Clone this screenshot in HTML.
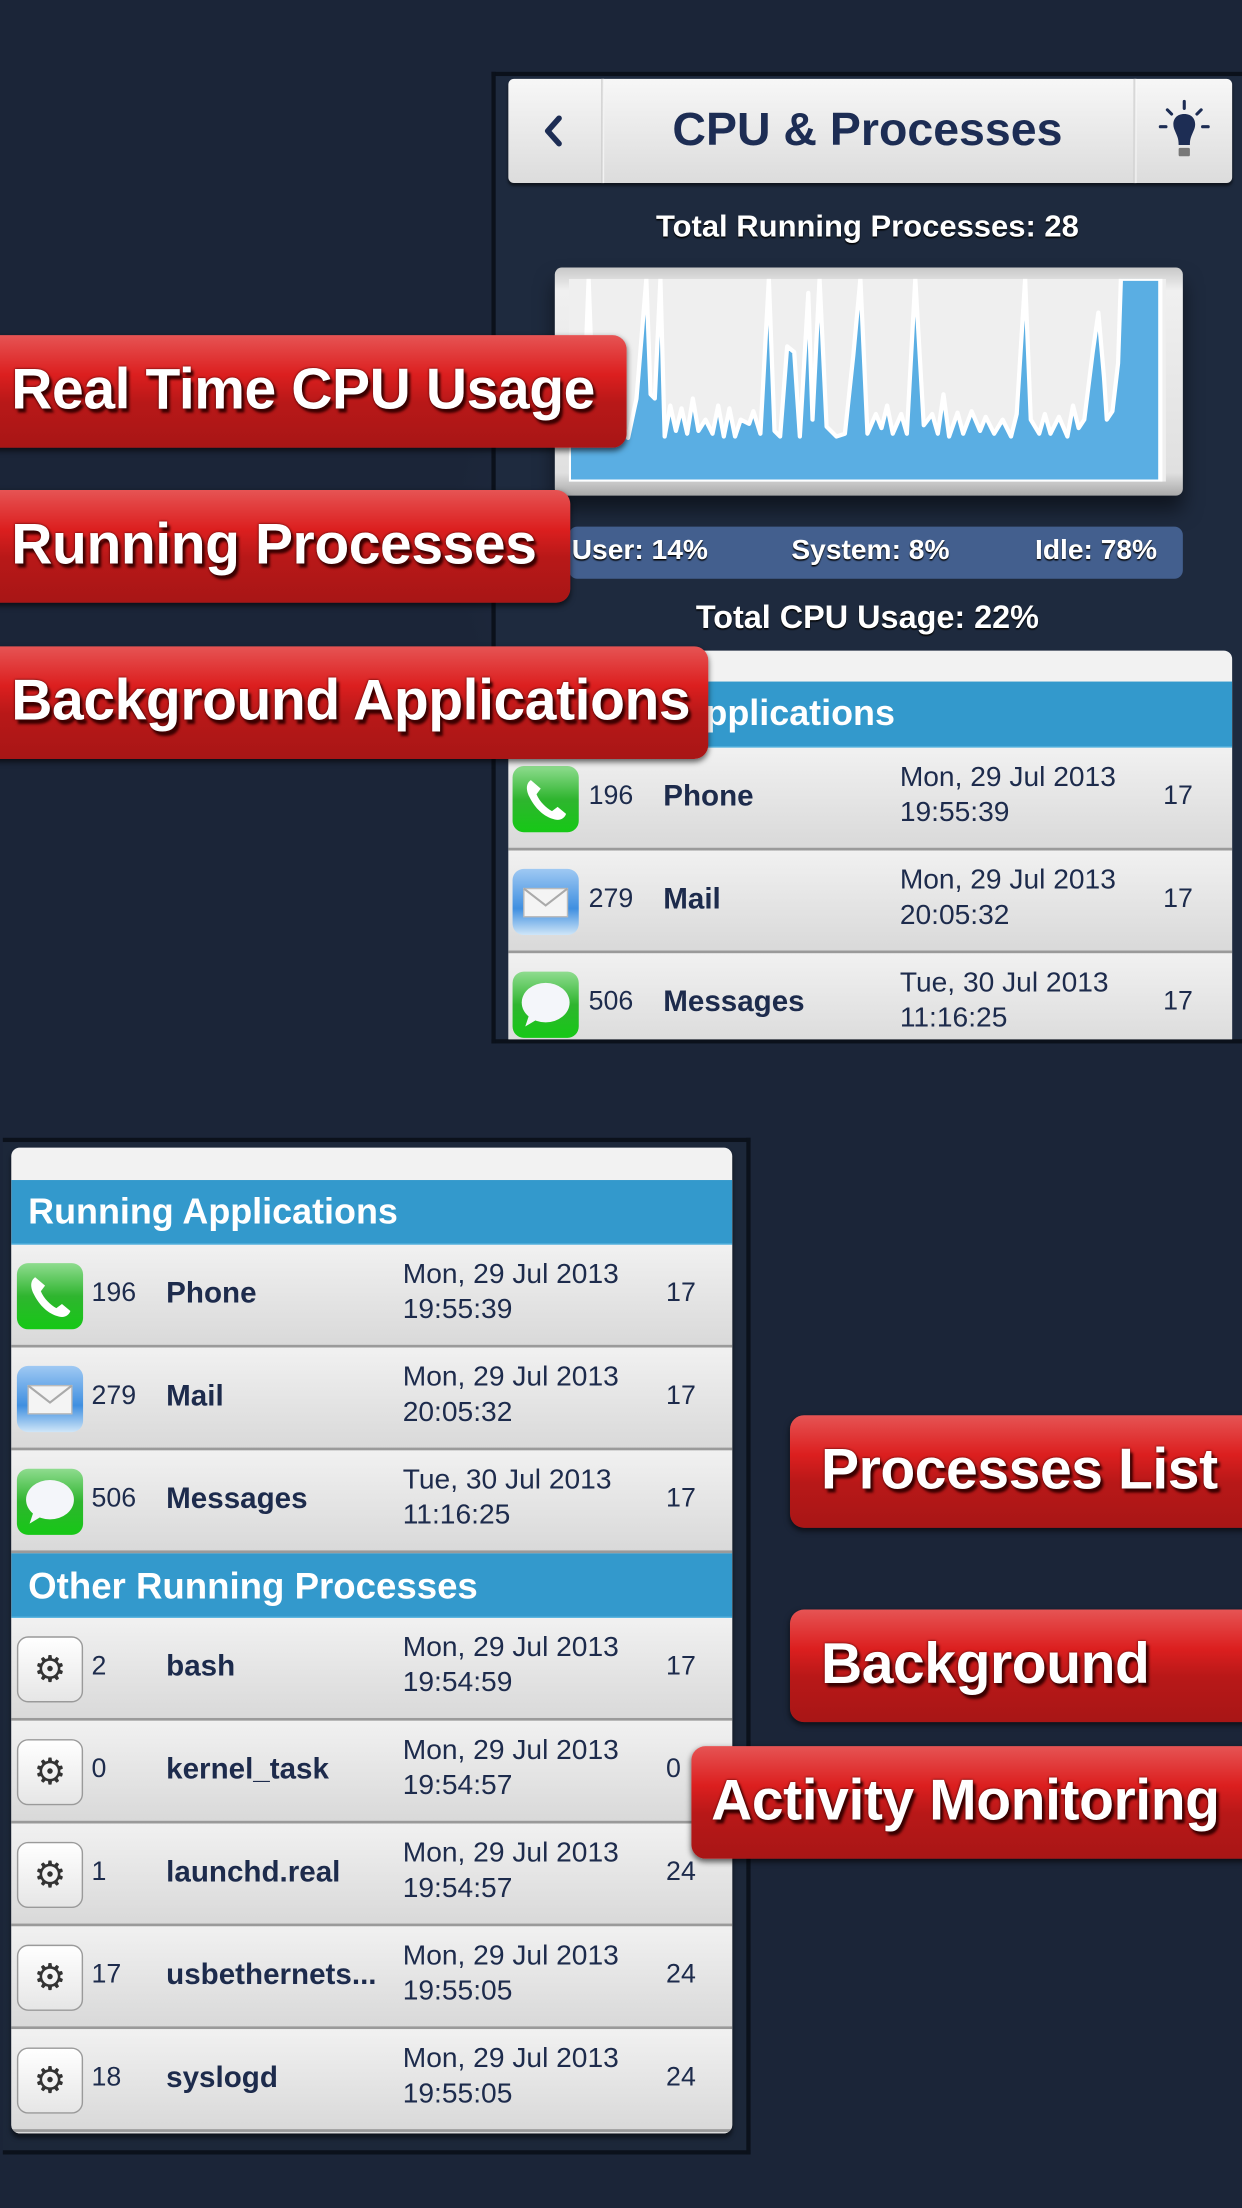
<!DOCTYPE html>
<html><head><meta charset="utf-8"><style>
*{margin:0;padding:0;box-sizing:border-box}
html,body{width:1242px;height:2208px;overflow:hidden;background:#1b2538}
#w{position:absolute;left:0;top:0;width:882px;height:1568px;transform:scale(1.40816);transform-origin:0 0;font-family:"Liberation Sans",sans-serif;background:radial-gradient(ellipse 300px 250px at 620px 380px,#2a3a55,transparent),#1b2538}
.abs{position:absolute}
.panel{position:absolute;background:#1e2a3e;border:3px solid #0b111b}
.nav{position:absolute;left:361px;top:56px;width:514px;height:74px;border-radius:4px;background:linear-gradient(#f7f7f7,#dcdcdc);box-shadow:0 2px 2px rgba(0,0,0,.5)}
.nav .sep{position:absolute;top:0;width:2px;height:74px;background:linear-gradient(90deg,#c4c4c4,#fff)}
.wt{position:absolute;color:#fff;font-weight:bold;font-size:22px;text-shadow:0 1px 1px #000;white-space:nowrap}
.list{position:absolute;overflow:hidden}
.hdr{height:46px;background:#3399cc;color:#fff;font-weight:bold;font-size:25.5px;line-height:46px;padding-left:12px;border-bottom:1px solid #5ab5e0;white-space:nowrap}
.row{position:relative;height:73px;background:linear-gradient(#f1f1f1,#d9d9d9);border-bottom:2px solid #9a9a9a;color:#1d2b4c}
.row .ic{position:absolute;left:3px;top:13px;width:47px;height:47px;border-radius:8px}
.row .pid{position:absolute;left:57px;top:24px;font-size:19px}
.row .nm{position:absolute;left:110px;top:23px;font-size:21px;font-weight:bold;white-space:nowrap}
.row .dt{position:absolute;left:278px;top:9px;font-size:20px;line-height:25px;white-space:nowrap}
.row .v{position:absolute;left:465px;top:24px;font-size:19px}
.g{background:linear-gradient(#8fdc8f,#2fb52f 50%,#16c816);}
.m{background:linear-gradient(#9fc9f3,#3f8fe0 60%,#cfe6f8);}
.gear{background:linear-gradient(#fff,#e6e6e6);border:1.5px solid #9a9a9a;text-align:center;font-size:26px;line-height:44px;color:#333}
.lab{position:absolute;height:80px;border-radius:10px;background:linear-gradient(#e65454,#dc1f1f 35%,#b81818 60%,#a81616);box-shadow:0 2px 4px rgba(0,0,0,.6);color:#fff;font-weight:bold;font-size:40.5px;line-height:76px;white-space:nowrap;text-shadow:2px 3px 2px #3a0000,0 0 2px #400;letter-spacing:-0.3px}
</style></head><body><div id="w">

<div class="panel" style="left:349px;top:51px;width:540px;height:690px;border-right:none"></div>
<div class="nav">
 <div class="sep" style="left:66px"></div><div class="sep" style="left:444px"></div>
 <svg class="abs" style="left:22px;top:24px" width="20" height="26" viewBox="0 0 20 26"><path d="M14 4 L6 13 L14 22" fill="none" stroke="#1d2d54" stroke-width="4" stroke-linecap="round" stroke-linejoin="round"/></svg>
 <div class="abs" style="left:66px;width:378px;top:17px;text-align:center;font-size:33px;font-weight:bold;color:#1d2d54">CPU &amp; Processes</div>
 <svg class="abs" style="left:460px;top:14px" width="40" height="48" viewBox="0 0 40 48"><g stroke="#1d2d54" stroke-width="2.2" stroke-linecap="round"><line x1="20" y1="2" x2="20" y2="7"/><line x1="8" y1="8" x2="11" y2="11"/><line x1="32" y1="8" x2="29" y2="11"/><line x1="3" y1="20" x2="7" y2="20"/><line x1="33" y1="20" x2="37" y2="20"/></g><path d="M20 11 C13 11 11 17 13 22 C15 27 16 28 16 33 L24 33 C24 28 25 27 27 22 C29 17 27 11 20 11Z" fill="#1d2d54"/><rect x="16" y="35" width="8" height="6" rx="1" fill="#777"/></svg>
</div>
<div class="wt" style="left:350px;width:532px;top:148px;text-align:center">Total Running Processes: 28</div>
<div class="abs" style="left:394px;top:190px;width:446px;height:162px;border-radius:5px;background:linear-gradient(#c8c8c8,#f0f0f0 10%,#e0e0e0 90%,#a8a8a8);box-shadow:0 10px 14px rgba(0,0,0,.5)"></div>
<svg class="abs" style="left:404px;top:198px" width="424" height="144" viewBox="0 0 424 144">
<rect width="424" height="144" fill="#efefef"/>
<path d="M0 144 L0 112 L10 105 L14 0 L18 108 L26 100 L31 112 L36 98 L42 113 L48 85 L55 0 L58 82 L61 85 L65 0 L68 112 L72 90 L76 108 L80 92 L84 110 L88 85 L92 108 L97 100 L102 110 L106 90 L110 112 L114 92 L118 112 L122 100 L128 103 L131 94 L136 110 L142 0 L146 108 L150 112 L155 48 L160 52 L164 112 L170 10 L173 100 L178 0 L183 105 L190 112 L196 110 L202 54 L207 0 L212 110 L218 96 L222 106 L226 90 L230 110 L236 96 L240 110 L246 0 L252 104 L258 96 L262 110 L266 82 L270 112 L276 95 L280 110 L286 94 L292 108 L296 98 L302 110 L308 100 L314 112 L318 96 L324 0 L328 100 L334 110 L338 96 L342 110 L348 98 L354 112 L358 90 L362 106 L366 100 L372 52 L376 24 L380 70 L382 100 L386 94 L390 60 L392 0 L420 0 L420 144 Z" fill="#5aaee3" stroke="#fff" stroke-width="3" stroke-linejoin="round"/>
</svg>
<div class="abs" style="left:404px;top:374px;width:436px;height:37px;border-radius:6px;background:#435f8e"></div>
<div class="wt" style="left:406px;top:380px;font-size:20px">User: 14%</div>
<div class="wt" style="left:562px;top:380px;font-size:20px">System: 8%</div>
<div class="wt" style="left:735px;top:380px;font-size:20px">Idle: 78%</div>
<div class="wt" style="left:350px;width:532px;top:425px;text-align:center;font-size:23px">Total CPU Usage: 22%</div>

<div class="list" style="left:361px;top:462px;width:514px;height:276px;border-radius:6px 6px 0 0;background:#f2f2f2">
 <div style="height:22px"></div>
 <div class="hdr" style="height:47px">Running Applications</div>
 <div class="row"><div class="ic g"><svg width="47" height="47" viewBox="0 0 47 47"><path d="M13 10 C10 12 9 16 12 22 C16 30 22 36 30 38 C34 39 37 37 38 34 L32 29 L28 32 C24 30 19 25 17 20 L20 16 Z" fill="#fff"/></svg></div><div class="pid">196</div><div class="nm">Phone</div><div class="dt">Mon, 29 Jul 2013<br>19:55:39</div><div class="v">17</div></div>
 <div class="row"><div class="ic m"><svg width="47" height="47" viewBox="0 0 47 47"><rect x="8" y="14" width="31" height="20" fill="#f4f4f4" stroke="#bbb"/><path d="M8 14 L23.5 26 L39 14" fill="none" stroke="#aaa" stroke-width="1.5"/></svg></div><div class="pid">279</div><div class="nm">Mail</div><div class="dt">Mon, 29 Jul 2013<br>20:05:32</div><div class="v">17</div></div>
 <div class="row"><div class="ic g"><svg width="47" height="47" viewBox="0 0 47 47"><ellipse cx="23.5" cy="22" rx="17" ry="14" fill="#f4f6fa"/><path d="M12 30 L9 39 L19 33Z" fill="#f4f6fa"/></svg></div><div class="pid">506</div><div class="nm">Messages</div><div class="dt">Tue, 30 Jul 2013<br>11:16:25</div><div class="v">17</div></div>
</div>

<div class="panel" style="left:2px;top:808px;width:531px;height:722px;border-left:none;background:#1c2739"></div>
<div class="list" style="left:8px;top:815px;width:512px;height:700px;border-radius:6px;background:#f2f2f2;box-shadow:0 3px 3px rgba(0,0,0,.5)">
 <div style="height:23px"></div>
 <div class="hdr">Running Applications</div>
 <div class="row"><div class="ic g" style="left:4px"><svg width="47" height="47" viewBox="0 0 47 47"><path d="M13 10 C10 12 9 16 12 22 C16 30 22 36 30 38 C34 39 37 37 38 34 L32 29 L28 32 C24 30 19 25 17 20 L20 16 Z" fill="#fff"/></svg></div><div class="pid">196</div><div class="nm">Phone</div><div class="dt">Mon, 29 Jul 2013<br>19:55:39</div><div class="v">17</div></div>
 <div class="row"><div class="ic m" style="left:4px"><svg width="47" height="47" viewBox="0 0 47 47"><rect x="8" y="14" width="31" height="20" fill="#f4f4f4" stroke="#bbb"/><path d="M8 14 L23.5 26 L39 14" fill="none" stroke="#aaa" stroke-width="1.5"/></svg></div><div class="pid">279</div><div class="nm">Mail</div><div class="dt">Mon, 29 Jul 2013<br>20:05:32</div><div class="v">17</div></div>
 <div class="row"><div class="ic g" style="left:4px"><svg width="47" height="47" viewBox="0 0 47 47"><ellipse cx="23.5" cy="22" rx="17" ry="14" fill="#f4f6fa"/><path d="M12 30 L9 39 L19 33Z" fill="#f4f6fa"/></svg></div><div class="pid">506</div><div class="nm">Messages</div><div class="dt">Tue, 30 Jul 2013<br>11:16:25</div><div class="v">17</div></div>
 <div class="hdr" style="font-size:26px">Other Running Processes</div>
 <div class="row"><div class="ic gear" style="left:4px">⚙</div><div class="pid">2</div><div class="nm">bash</div><div class="dt">Mon, 29 Jul 2013<br>19:54:59</div><div class="v">17</div></div>
 <div class="row"><div class="ic gear" style="left:4px">⚙</div><div class="pid">0</div><div class="nm">kernel_task</div><div class="dt">Mon, 29 Jul 2013<br>19:54:57</div><div class="v">0</div></div>
 <div class="row"><div class="ic gear" style="left:4px">⚙</div><div class="pid">1</div><div class="nm">launchd.real</div><div class="dt">Mon, 29 Jul 2013<br>19:54:57</div><div class="v">24</div></div>
 <div class="row"><div class="ic gear" style="left:4px">⚙</div><div class="pid">17</div><div class="nm">usbethernets...</div><div class="dt">Mon, 29 Jul 2013<br>19:55:05</div><div class="v">24</div></div>
 <div class="row"><div class="ic gear" style="left:4px">⚙</div><div class="pid">18</div><div class="nm">syslogd</div><div class="dt">Mon, 29 Jul 2013<br>19:55:05</div><div class="v">24</div></div>
 <div style="height:12px;background:linear-gradient(#ddd,#aaa)"></div>
</div>

<div class="lab" style="left:-12px;top:238px;width:457px;padding-left:20px">Real Time CPU Usage</div>
<div class="lab" style="left:-12px;top:348px;width:417px;padding-left:20px">Running Processes</div>
<div class="lab" style="left:-12px;top:459px;width:515px;padding-left:20px">Background Applications</div>
<div class="lab" style="left:561px;top:1005px;width:340px;padding-left:22px">Processes List</div>
<div class="lab" style="left:561px;top:1143px;width:340px;padding-left:22px">Background</div>
<div class="lab" style="left:491px;top:1240px;width:410px;padding-left:14px">Activity Monitoring</div>

</div></body></html>
